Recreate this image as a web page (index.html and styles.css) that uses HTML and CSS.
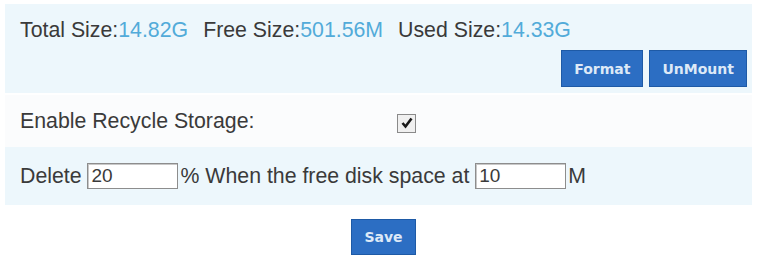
FILE: index.html
```html
<!DOCTYPE html>
<html>
<head>
<meta charset="utf-8">
<link rel="stylesheet" href="styles.css">
</head>
<body>
<div class="page">
  <div class="panel">
    <div class="sizes">
      <span class="item">Total Size:<span class="val">14.82G</span></span>
      <span class="item">Free Size:<span class="val">501.56M</span></span>
      <span class="item">Used Size:<span class="val">14.33G</span></span>
    </div>
    <div class="actions">
      <button class="btn">Format</button>
      <button class="btn">UnMount</button>
    </div>
  </div>
  <div class="row plain">
    <span class="label">Enable Recycle Storage:</span>
    <span class="check"><svg width="14" height="14" viewBox="0 0 14 14"><path d="M2.5 7 L5.5 10.5 L11.5 2.5" fill="none" stroke="#1a1a1a" stroke-width="2.6"/></svg></span>
  </div>
  <div class="row blue">
    <span>Delete&nbsp;</span><span class="field">20</span><span>% When the free disk space at&nbsp;</span><span class="field">10</span><span>M</span>
  </div>
  <div class="save-row">
    <button class="btn">Save</button>
  </div>
</div>
</body>
</html>
```
FILE: styles.css
```css
html, body { margin: 0; padding: 0; background: #ffffff; }
body { font-family: "Liberation Sans", Arial, sans-serif; color: #3a3a3a; }
.page { padding: 4px 7px 0 5px; }
.panel { background: #edf7fc; padding: 14px 5px 6px 15px; }
.sizes { font-size: 21.3px; line-height: 24px; display: flex; gap: 15px; }
.val { color: #52abd9; }
.actions { display: flex; justify-content: flex-end; gap: 6px; margin-top: 8px; }
.btn {
  font-family: "DejaVu Sans", Verdana, sans-serif;
  font-weight: bold;
  font-size: 14px;
  height: 37px;
  padding: 0 12px;
  background: #2c6ec3;
  color: #dde9f7;
  border: 1px solid #1e5aa6;
  border-radius: 0;
}
.row { display: flex; align-items: center; padding-left: 15px; font-size: 21.3px; }
.plain { height: 52px; background: #fbfcfd; margin-top: 2px; }
.blue { height: 58px; background: #edf7fc; }
.label { width: 377px; }
.check {
  width: 17px; height: 17px; border: 1px solid #8a8a8a; background: #f0f0f0;
  display: flex; align-items: center; justify-content: center;
  margin-top: 4px;
}
.field {
  width: 86px; height: 24px; border: 1px solid #8d8d8d; background: #fff;
  box-shadow: inset 1px 1px 0 #c8c8c8;
  font-size: 19px; line-height: 24px; padding-left: 3px; margin-right: 2px;
}
.save-row { display: flex; justify-content: center; padding-top: 14px; padding-left: 10px; }
.save-row .btn { height: 36px; }
```
